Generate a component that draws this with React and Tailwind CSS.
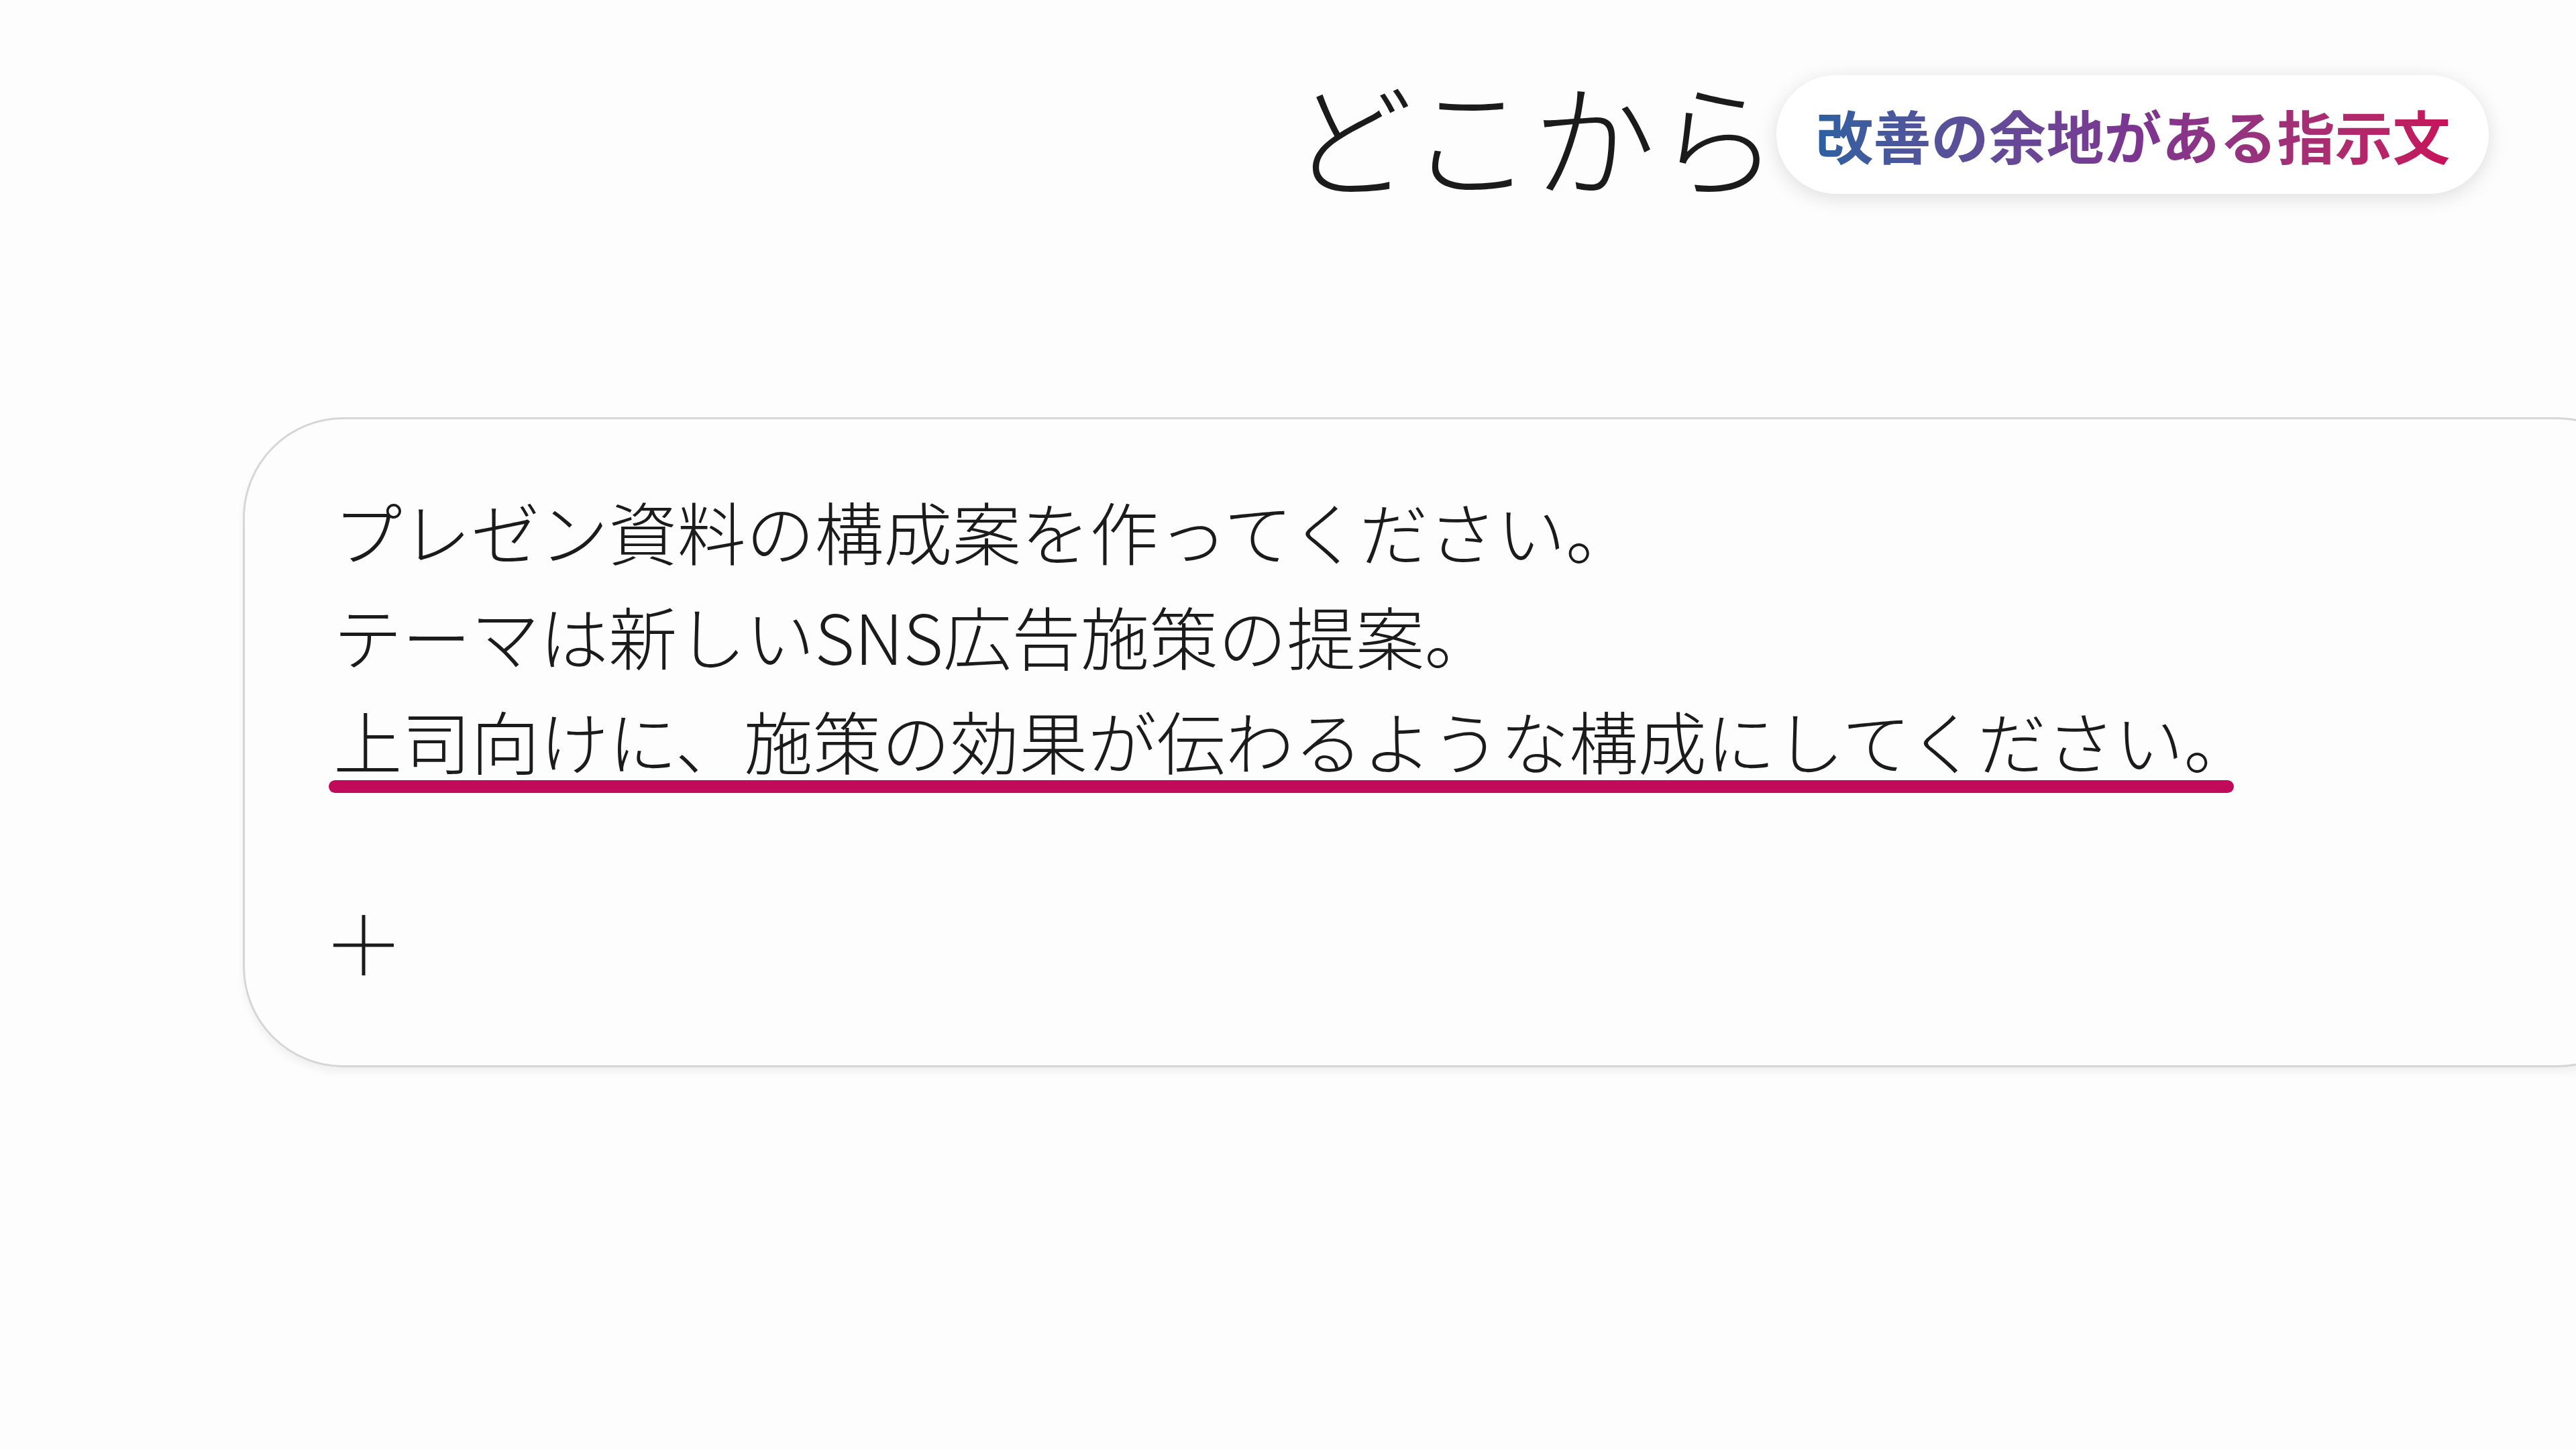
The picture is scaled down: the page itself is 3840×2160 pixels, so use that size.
export default function App() {
  return (
    <div className="w-[3840px] h-[2160px] overflow-hidden bg-[#fdfdfd] font-['Noto_Sans_CJK_JP',sans-serif] text-[#1b1b1b]">
      {/* Heading with badge */}
      <div className="flex items-center pt-[92px] pl-[1922px]">
        <h1 className="whitespace-nowrap text-[184px] leading-[216px] font-light">どこから</h1>
        <div className="-ml-[4px] rounded-full bg-white px-[58px] py-[37px] shadow-[0_6px_30px_rgba(0,0,0,0.13)]">
          <span className="block whitespace-nowrap bg-linear-to-r from-[#2a60a0] via-[#7b3590] to-[#c8105a] bg-clip-text text-[86px] font-bold leading-[103px] text-transparent">
            改善の余地がある指示文
          </span>
        </div>
      </div>

      {/* Prompt card */}
      <div className="ml-[362px] mt-[314px] w-[3600px] rounded-[150px] border-[3px] border-[#d6d6d6] bg-[#fdfdfd] pl-[132px] pt-[88px] pb-[134px] shadow-[0_8px_12px_rgba(0,0,0,0.05)]">
        <div className="text-[102.5px] leading-[156px] font-light">
          <p>プレゼン資料の構成案を作ってください。</p>
          <p>テーマは新しいSNS広告施策の提案。</p>
          <div className="flex w-fit flex-col">
            <p>上司向けに、施策の効果が伝わるような構成にしてください。</p>
            <div className="-ml-[7px] mr-[28px] -mt-[18px] h-[19px] rounded-full bg-[#c20a5a]" />
          </div>
        </div>

        {/* Add button */}
        <div className="mt-[182px] flex h-[90px] w-[90px] items-center justify-center">
          <svg width="90" height="90" viewBox="0 0 90 90" fill="none" stroke="#1b1b1b" strokeWidth="5">
            <path d="M45 0v90M0 45h90" />
          </svg>
        </div>
      </div>
    </div>
  );
}
